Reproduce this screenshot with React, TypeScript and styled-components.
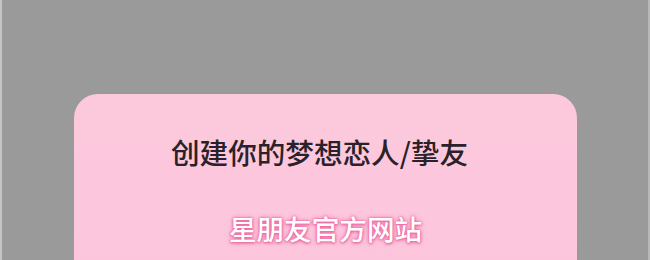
import React from 'react';
import styled, { createGlobalStyle } from 'styled-components';

const GlobalStyle = createGlobalStyle`
  html, body {
    margin: 0;
    padding: 0;
    background: #999999;
  }
  body {
    font-family: "Noto Sans CJK SC", "Noto Sans", sans-serif;
  }
`;

const Screen = styled.div`
  box-sizing: border-box;
  width: 650px;
  height: 260px;
  overflow: hidden;
  background: #9a9a9a;
  border-left: 2px solid #c4c4c4;
  border-right: 2px solid #b8b8b8;
  padding: 94px 71px 0 72px;
`;

const Card = styled.div`
  height: 200px;
  border-radius: 24px 24px 0 0;
  background: linear-gradient(180deg, #fcc9dc 0%, #fdc5dc 100%);
  display: flex;
  flex-direction: column;
  align-items: center;
`;

const Title = styled.h2`
  margin: 42px 0 0 -12px;
  font-size: 28.6px;
  line-height: 32px;
  font-weight: 500;
  color: #2a2228;
  letter-spacing: 0;
`;

const SiteLink = styled.div`
  margin-top: 44px;
  font-size: 27.6px;
  line-height: 32px;
  font-weight: 500;
  color: #ffffff;
  text-shadow: 0 0 2px #ee5f9c, 0 0 5px #f06ea6, 0 1px 3px #e05a98;
`;

export default function App() {
  return (
    <>
      <GlobalStyle />
      <Screen>
        <Card>
          <Title>创建你的梦想恋人/挚友</Title>
          <SiteLink>星朋友官方网站</SiteLink>
        </Card>
      </Screen>
    </>
  );
}
